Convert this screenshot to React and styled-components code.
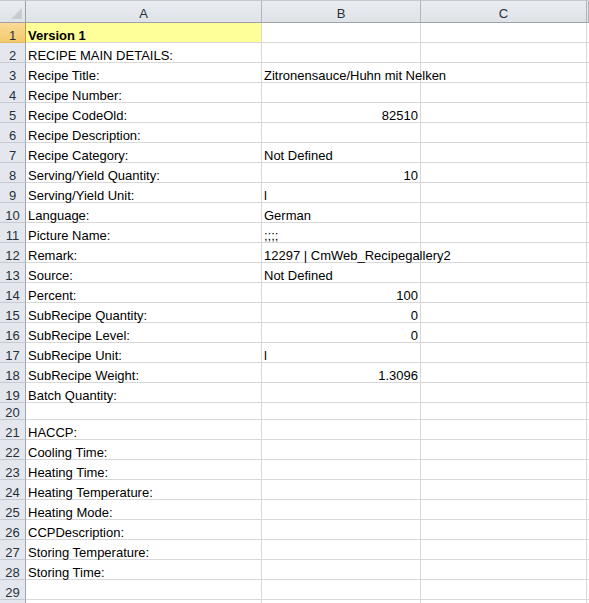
import React from "react";
import styled, { createGlobalStyle } from "styled-components";

const Global = createGlobalStyle`
  html, body { margin: 0; padding: 0; background: #ffffff; overflow: hidden; }
  body { font-family: "Liberation Sans", Arial, sans-serif; }
`;

const COLS = "26px 236px 159px 166px 1fr";

const Sheet = styled.div`
  width: 589px;
  height: 603px;
  overflow: hidden;
  background: #fff;
`;

const HeaderRow = styled.div`
  display: grid;
  grid-template-columns: ${COLS};
  height: 23px;
  border-top: 1px solid #c4c8cd;
  box-sizing: border-box;
`;

const ColHead = styled.div`
  box-sizing: border-box;
  background: linear-gradient(#e9ecf0, #dfe3e8);
  border-right: 1px solid #b1b5ba;
  border-bottom: 1px solid #9ea2a7;
  font-size: 13px;
  color: #27303a;
  display: flex;
  align-items: center;
  justify-content: center;
  padding-top: 3px;
`;

const Corner = styled(ColHead)`
  position: relative;
  border-right-color: #9ea2a7;
`;

const Tri = styled.div`
  position: absolute;
  right: 3px;
  bottom: 3px;
  width: 0;
  height: 0;
  border-left: 11px solid transparent;
  border-bottom: 11px solid #c8ccd1;
`;

const Row = styled.div`
  display: grid;
  grid-template-columns: ${COLS};
  height: ${(p) => p.$h}px;
`;

const RowHead = styled.div`
  box-sizing: border-box;
  background: ${(p) => (p.$active ? "linear-gradient(#f9da97, #f5c96d)" : "#e4e8ee")};
  border-right: 1px solid ${(p) => (p.$active ? "#c29b3c" : "#9ea5ae")};
  border-bottom: 1px solid ${(p) => (p.$active ? "#e3b964" : "#c5cad1")};
  font-size: 13px;
  color: #27303a;
  display: flex;
  align-items: flex-end;
  justify-content: center;
  line-height: 12px;
`;

const Cell = styled.div`
  box-sizing: border-box;
  border-right: 1px solid #d8d8d8;
  border-bottom: 1px solid #d8d8d8;
  background: ${(p) => (p.$fill ? "#ffff99" : "transparent")};
  font-size: 13px;
  font-weight: ${(p) => (p.$bold ? 700 : 400)};
  color: #000;
  display: flex;
  align-items: flex-end;
  justify-content: ${(p) => (p.$num ? "flex-end" : "flex-start")};
  padding: 0 2px;
  line-height: 12px;
  white-space: nowrap;
  overflow: visible;
  position: relative;
  z-index: ${(p) => (p.$over ? 1 : 0)};
`;

const rows = [
  ["Version 1", "", true],
  ["RECIPE MAIN DETAILS:", ""],
  ["Recipe Title:", "Zitronensauce/Huhn mit Nelken"],
  ["Recipe Number:", ""],
  ["Recipe CodeOld:", 82510],
  ["Recipe Description:", ""],
  ["Recipe Category:", "Not Defined"],
  ["Serving/Yield Quantity:", 10],
  ["Serving/Yield Unit:", "l"],
  ["Language:", "German"],
  ["Picture Name:", ";;;;"],
  ["Remark:", "12297 | CmWeb_Recipegallery2"],
  ["Source:", "Not Defined"],
  ["Percent:", 100],
  ["SubRecipe Quantity:", 0],
  ["SubRecipe Level:", 0],
  ["SubRecipe Unit:", "l"],
  ["SubRecipe Weight:", "1.3096", false, true],
  ["Batch Quantity:", ""],
  ["", "", false, false, 17],
  ["HACCP:", ""],
  ["Cooling Time:", ""],
  ["Heating Time:", ""],
  ["Heating Temperature:", ""],
  ["Heating Mode:", ""],
  ["CCPDescription:", ""],
  ["Storing Temperature:", ""],
  ["Storing Time:", ""],
  ["", ""],
  ["", ""],
];

export default function App() {
  return (
    <>
      <Global />
      <Sheet>
        <HeaderRow>
          <Corner>
            <Tri />
          </Corner>
          <ColHead>A</ColHead>
          <ColHead>B</ColHead>
          <ColHead>C</ColHead>
          <ColHead />
        </HeaderRow>
        {rows.map(([a, b, first, forceNum, h], i) => {
          const isNum = typeof b === "number" || forceNum;
          return (
            <Row key={i} $h={h || 20}>
              <RowHead $active={i === 0}>{i + 1}</RowHead>
              <Cell $fill={first} $bold={first}>{a}</Cell>
              <Cell $num={isNum} $over={!isNum && b !== ""}>{String(b)}</Cell>
              <Cell />
              <Cell />
            </Row>
          );
        })}
      </Sheet>
    </>
  );
}
